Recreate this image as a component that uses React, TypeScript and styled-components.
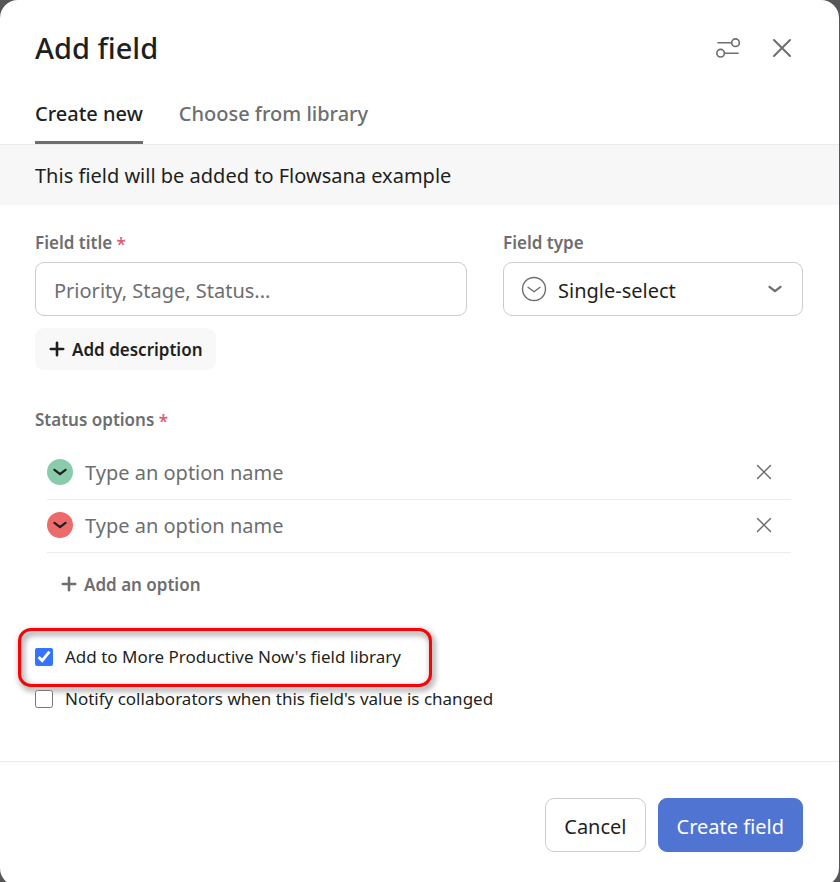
import React from "react";
import styled, { createGlobalStyle, css } from "styled-components";

const ink = "#1e1f21";
const muted = "#6d6e6f";
const line = "#edeae9";
const control = "#cfcbcb";
const danger = "#de5f73";

const GlobalStyle = createGlobalStyle`
  *, *::before, *::after { box-sizing: border-box; }
  body { margin: 0; background: #565557; color: ${ink}; }
  body, button, input, select {
    font-family: "Segoe UI", "Noto Sans", "Open Sans", sans-serif;
    font-size: 20px;
  }
`;

const Backdrop = styled.div`
  height: 100vh;
  overflow: hidden;
  padding-right: 1px;
`;

const Dialog = styled.form`
  background: #fff;
  border-radius: 18px;
`;

const Header = styled.header`
  display: flex;
  align-items: center;
  justify-content: space-between;
  padding: 24px 45px 0 35px;
`;

const Title = styled.h1`
  margin: 0;
  font-size: 29px;
  line-height: 48px;
  font-weight: 550;
`;

const HeaderActions = styled.div`
  display: flex;
  gap: 30px;
`;

const IconButton = styled.button`
  display: flex;
  padding: 0;
  border: 0;
  background: none;
  color: ${muted};
  cursor: pointer;
`;

const Tabs = styled.div`
  display: flex;
  gap: 36px;
  padding: 24px 35px 0;
  border-bottom: 1px solid ${line};
`;

const Tab = styled.button<{ $active?: boolean }>`
  padding: 1px 0 11px;
  border: 0;
  border-bottom: 3px solid ${(p) => (p.$active ? muted : "transparent")};
  background: none;
  color: ${(p) => (p.$active ? ink : muted)};
  font-weight: 550;
  line-height: 33px;
  cursor: pointer;
`;

const Banner = styled.p`
  margin: 0;
  padding: 16px 35px 14px;
  background: #f7f7f7;
  line-height: 30px;
`;

const Body = styled.div`
  padding: 24px 36px 47px 35px;
`;

const FieldRow = styled.div`
  display: grid;
  grid-template-columns: minmax(0, 1fr) 300px;
  gap: 36px;
`;

const labelText = css`
  display: block;
  margin: 0;
  color: ${muted};
  font-size: 17px;
  font-weight: 600;
  line-height: 27px;
`;

const Label = styled.label`
  ${labelText}
  margin-bottom: 6px;
`;

const Fieldset = styled.fieldset`
  margin: 36px 0 0;
  padding: 0;
  border: 0;
`;

const Legend = styled.legend`
  ${labelText}
  padding: 0;
  margin-bottom: 14px;
`;

const Required = styled.span`
  display: inline-block;
  color: ${danger};
  line-height: 17px;
  vertical-align: middle;
`;

const controlBox = css`
  width: 100%;
  height: 54px;
  border: 1px solid ${control};
  border-radius: 9px;
  background: #fff;
  color: ${ink};
`;

const TextInput = styled.input`
  ${controlBox}
  padding: 2px 18px 0;
  &::placeholder { color: ${muted}; opacity: 1; }
`;

const SelectWrap = styled.div`
  display: grid;
  grid-template-columns: 18px 26px 1fr 16px 19px;
  align-items: center;
  color: ${muted};
  svg { grid-row: 1; pointer-events: none; z-index: 1; }
  svg:first-of-type { grid-column: 2; }
  svg:last-of-type { grid-column: 4; }
`;

const Select = styled.select`
  ${controlBox}
  grid-row: 1;
  grid-column: 1 / -1;
  appearance: none;
  padding: 2px 44px 0 54px;
`;

const GhostButton = styled.button<{ $filled?: boolean }>`
  display: flex;
  align-items: center;
  gap: 7px;
  height: 42px;
  padding: 0 13px 0 14px;
  border: 0;
  border-radius: 9px;
  background: ${(p) => (p.$filled ? "#f8f8f8" : "none")};
  color: ${(p) => (p.$filled ? ink : muted)};
  font-size: 17px;
  font-weight: 600;
  cursor: pointer;
`;

const DescriptionSlot = styled.div`
  margin-top: 12px;
`;

const OptionList = styled.ul`
  margin: 0 12px 10px;
  padding: 0;
  list-style: none;
`;

const OptionRow = styled.li`
  display: flex;
  align-items: center;
  height: 53px;
  padding: 0 19px 2px 0;
  border-bottom: 1px solid ${line};
`;

const Swatch = styled.button<{ $color: string }>`
  display: flex;
  align-items: center;
  justify-content: center;
  width: 26px;
  height: 26px;
  padding: 0;
  border: 0;
  border-radius: 50%;
  background: ${(p) => p.$color};
  color: ${ink};
  cursor: pointer;
`;

const OptionInput = styled.input`
  flex: 1;
  min-width: 0;
  padding: 0 12px;
  border: 0;
  background: none;
  color: ${ink};
  &::placeholder { color: ${muted}; opacity: 1; }
`;

const AddOptionSlot = styled.div`
  padding-left: 12px;
`;

const Checks = styled.div`
  display: flex;
  flex-direction: column;
  align-items: flex-start;
  gap: 12px;
  margin-top: 37px;
`;

const CheckLabel = styled.label<{ $highlighted?: boolean }>`
  position: relative;
  display: flex;
  align-items: center;
  gap: 12px;
  font-size: 17px;
  line-height: 30px;
  ${(p) =>
    p.$highlighted &&
    css`
      &::after {
        content: "";
        position: absolute;
        inset: -14px -31px -15px -17px;
        border: 3px solid #f80307;
        border-radius: 13px;
        filter: drop-shadow(2px 3px 3px rgba(0, 0, 0, 0.6));
        pointer-events: none;
      }
    `}
`;

const Checkbox = styled.input`
  width: 18px;
  height: 18px;
  margin: 0;
  accent-color: #3574fc;
`;

const Footer = styled.footer`
  display: flex;
  justify-content: flex-end;
  gap: 12px;
  padding: 36px 36px 34px;
  border-top: 1px solid ${line};
`;

const Button = styled.button<{ $primary?: boolean }>`
  height: 54px;
  padding: 2px 18px 0;
  border: 1px solid ${(p) => (p.$primary ? "#4f74d2" : control)};
  border-radius: 9px;
  background: ${(p) => (p.$primary ? "#4f74d2" : "#fff")};
  color: ${(p) => (p.$primary ? "#fff" : ink)};
  cursor: pointer;
`;

const stroke = {
  fill: "none",
  stroke: "currentColor",
  strokeLinecap: "round" as const,
  strokeLinejoin: "round" as const,
  "aria-hidden": true,
};

const SlidersIcon = () => (
  <svg width="24" height="24" viewBox="0 0 24 24" {...stroke} strokeWidth="1.6">
    <circle cx="19.5" cy="6.7" r="3.8" />
    <path d="M2 6.7H15.5M8.5 17.2H22" />
    <circle cx="4.6" cy="17.2" r="3.8" />
  </svg>
);

const CloseIcon = () => (
  <svg width="24" height="24" viewBox="0 0 24 24" {...stroke} strokeWidth="2">
    <path d="M4 4L20 20M20 4L4 20" />
  </svg>
);

const RemoveIcon = () => (
  <svg width="16" height="16" viewBox="0 0 16 16" {...stroke} strokeWidth="1.5">
    <path d="M1.5 1.5L14.5 14.5M14.5 1.5L1.5 14.5" />
  </svg>
);

const Chevron = () => (
  <svg width="14" height="10" viewBox="0 0 14 10" {...stroke} strokeWidth="2.2">
    <path d="M1.5 2.8L7 7.2L12.5 2.8" />
  </svg>
);

const PlusIcon = () => (
  <svg width="16" height="16" viewBox="0 0 16 16" {...stroke} strokeWidth="2.6">
    <path d="M8 1.8V14.2M1.8 8H14.2" />
  </svg>
);

const SingleSelectIcon = () => (
  <svg width="26" height="26" viewBox="0 0 26 26" {...stroke} strokeWidth="1.4">
    <circle cx="13" cy="13" r="11.5" />
    <path d="M7 11.3L13 15.8L19 11.3" />
  </svg>
);

const options = [
  { id: "green", color: "#8acbac" },
  { id: "red", color: "#ec6a6a" },
];

export default function App() {
  return (
    <>
      <GlobalStyle />
      <Backdrop>
        <Dialog role="dialog" aria-labelledby="dialog-title" onSubmit={(e) => e.preventDefault()}>
          <Header>
            <Title id="dialog-title">Add field</Title>
            <HeaderActions>
              <IconButton type="button" aria-label="Customize">
                <SlidersIcon />
              </IconButton>
              <IconButton type="button" aria-label="Close">
                <CloseIcon />
              </IconButton>
            </HeaderActions>
          </Header>
          <Tabs role="tablist">
            <Tab type="button" role="tab" aria-selected="true" $active>Create new</Tab>
            <Tab type="button" role="tab" aria-selected="false">Choose from library</Tab>
          </Tabs>
          <Banner>This field will be added to Flowsana example</Banner>
          <Body>
            <FieldRow>
              <div>
                <Label htmlFor="field-title">Field title <Required>*</Required></Label>
                <TextInput id="field-title" placeholder="Priority, Stage, Status..." />
              </div>
              <div>
                <Label htmlFor="field-type">Field type</Label>
                <SelectWrap>
                  <SingleSelectIcon />
                  <Select id="field-type" defaultValue="single">
                    <option value="single">Single-select</option>
                  </Select>
                  <Chevron />
                </SelectWrap>
              </div>
            </FieldRow>
            <DescriptionSlot>
              <GhostButton type="button" $filled><PlusIcon />Add description</GhostButton>
            </DescriptionSlot>
            <Fieldset>
              <Legend>Status options <Required>*</Required></Legend>
              <OptionList>
                {options.map((o) => (
                  <OptionRow key={o.id}>
                    <Swatch type="button" $color={o.color} aria-label={`Option color: ${o.id}`}>
                      <Chevron />
                    </Swatch>
                    <OptionInput placeholder="Type an option name" aria-label="Option name" />
                    <IconButton type="button" aria-label="Remove option">
                      <RemoveIcon />
                    </IconButton>
                  </OptionRow>
                ))}
              </OptionList>
              <AddOptionSlot>
                <GhostButton type="button"><PlusIcon />Add an option</GhostButton>
              </AddOptionSlot>
            </Fieldset>
            <Checks>
              <CheckLabel $highlighted>
                <Checkbox type="checkbox" defaultChecked />
                Add to More Productive Now's field library
              </CheckLabel>
              <CheckLabel>
                <Checkbox type="checkbox" />
                Notify collaborators when this field's value is changed
              </CheckLabel>
            </Checks>
          </Body>
          <Footer>
            <Button type="button">Cancel</Button>
            <Button type="submit" $primary>Create field</Button>
          </Footer>
        </Dialog>
      </Backdrop>
    </>
  );
}
